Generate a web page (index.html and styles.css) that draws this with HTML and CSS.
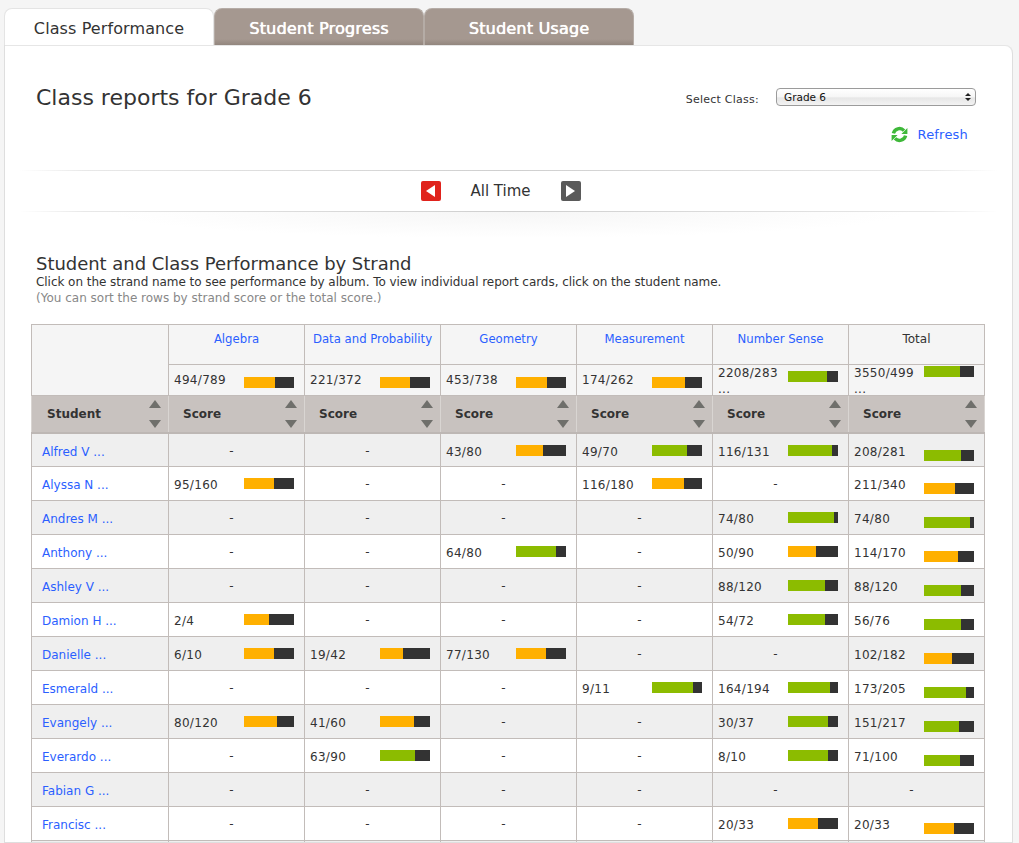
FILE: index.html
```html
<!DOCTYPE html>
<html lang="en">
<head>
<meta charset="utf-8">
<title>Class reports for Grade 6</title>
<link rel="stylesheet" href="styles.css">
</head>
<body>
<nav class="tabs">
  <a class="tab tab-active">Class Performance</a>
  <a class="tab">Student Progress</a>
  <a class="tab">Student Usage</a>
</nav>
<main class="panel">
  <header class="head">
    <h1 class="title">Class reports for Grade 6</h1>
    <div class="controls">
      <div class="class-picker">
        <label class="picker-label" for="cls">Select Class:</label>
        <div class="select-wrap">
          <select id="cls" class="select"><option>Grade 6</option></select>
        </div>
      </div>
      <a class="refresh">
        <svg class="refresh-icon" width="17" height="17" viewBox="0 0 17 17"><path fill="none" stroke="#3fb83a" stroke-width="3.4" d="M2.400 7.400A6.200 6.200 0 0 1 13 4.600M14.600 9.600A6.200 6.200 0 0 1 4 12.400"/><path fill="#3fb83a" d="M16.400 2V8H10.400zM0.600 15V9H6.600z"/></svg>
        <span>Refresh</span>
      </a>
    </div>
  </header>
  <div class="timebar">
    <button class="nav-btn nav-prev"><span class="tri-left"></span></button>
    <span class="time-label">All Time</span>
    <button class="nav-btn nav-next"><span class="tri-right"></span></button>
  </div>
  <section class="strand">
    <h2 class="strand-title">Student and Class Performance by Strand</h2>
    <p class="strand-help">Click on the strand name to see performance by album. To view individual report cards, click on the student name.</p>
    <p class="strand-note">(You can sort the rows by strand score or the total score.)</p>
    <table class="grid">
      <colgroup><col class="c-first"><col class="c"><col class="c"><col class="c"><col class="c"><col class="c"><col class="c"></colgroup>
      <thead>
        <tr class="r-names">
          <th rowspan="2" class="blank"></th>
          <th><a class="link">Algebra</a></th>
          <th><a class="link">Data and Probability</a></th>
          <th><a class="link">Geometry</a></th>
          <th><a class="link">Measurement</a></th>
          <th><a class="link">Number Sense</a></th>
          <th class="total-name">Total</th>
        </tr>
        <tr class="r-sum">
          <td><div class="sum"><span>494/789</span><span class="bar"><i class="o" style="width:31px"></i></span></div></td>
          <td><div class="sum"><span>221/372</span><span class="bar"><i class="o" style="width:30px"></i></span></div></td>
          <td><div class="sum"><span>453/738</span><span class="bar"><i class="o" style="width:31px"></i></span></div></td>
          <td><div class="sum"><span>174/262</span><span class="bar"><i class="o" style="width:33px"></i></span></div></td>
          <td><div class="sum wrap"><span>2208/283<br>...</span><span class="bar"><i class="g" style="width:39px"></i></span></div></td>
          <td><div class="sum wrap wrap-total"><span>3550/499<br>...</span><span class="bar"><i class="g" style="width:36px"></i></span></div></td>
        </tr>
        <tr class="r-sort">
          <th class="sort-cell"><div class="sort"><span>Student</span><span class="arrows"><b class="up"></b><b class="down"></b></span></div></th>
          <th class="sort-cell"><div class="sort"><span>Score</span><span class="arrows"><b class="up"></b><b class="down"></b></span></div></th>
          <th class="sort-cell"><div class="sort"><span>Score</span><span class="arrows"><b class="up"></b><b class="down"></b></span></div></th>
          <th class="sort-cell"><div class="sort"><span>Score</span><span class="arrows"><b class="up"></b><b class="down"></b></span></div></th>
          <th class="sort-cell"><div class="sort"><span>Score</span><span class="arrows"><b class="up"></b><b class="down"></b></span></div></th>
          <th class="sort-cell"><div class="sort"><span>Score</span><span class="arrows"><b class="up"></b><b class="down"></b></span></div></th>
          <th class="sort-cell"><div class="sort"><span>Score</span><span class="arrows"><b class="up"></b><b class="down"></b></span></div></th>
        </tr>
      </thead>
      <tbody>
        <tr>
          <td><a class="link name">Alfred V ...</a></td>
          <td><div class="dash">-</div></td>
          <td><div class="dash">-</div></td>
          <td><div class="cell"><span>43/80</span><span class="bar"><i class="o" style="width:27px"></i></span></div></td>
          <td><div class="cell"><span>49/70</span><span class="bar"><i class="g" style="width:35px"></i></span></div></td>
          <td><div class="cell"><span>116/131</span><span class="bar"><i class="g" style="width:44px"></i></span></div></td>
          <td><div class="cell total"><span>208/281</span><span class="bar"><i class="g" style="width:37px"></i></span></div></td>
        </tr>
        <tr>
          <td><a class="link name">Alyssa N ...</a></td>
          <td><div class="cell"><span>95/160</span><span class="bar"><i class="o" style="width:30px"></i></span></div></td>
          <td><div class="dash">-</div></td>
          <td><div class="dash">-</div></td>
          <td><div class="cell"><span>116/180</span><span class="bar"><i class="o" style="width:32px"></i></span></div></td>
          <td><div class="dash">-</div></td>
          <td><div class="cell total"><span>211/340</span><span class="bar"><i class="o" style="width:31px"></i></span></div></td>
        </tr>
        <tr>
          <td><a class="link name">Andres M ...</a></td>
          <td><div class="dash">-</div></td>
          <td><div class="dash">-</div></td>
          <td><div class="dash">-</div></td>
          <td><div class="dash">-</div></td>
          <td><div class="cell"><span>74/80</span><span class="bar"><i class="g" style="width:46px"></i></span></div></td>
          <td><div class="cell total"><span>74/80</span><span class="bar"><i class="g" style="width:46px"></i></span></div></td>
        </tr>
        <tr>
          <td><a class="link name">Anthony ...</a></td>
          <td><div class="dash">-</div></td>
          <td><div class="dash">-</div></td>
          <td><div class="cell"><span>64/80</span><span class="bar"><i class="g" style="width:40px"></i></span></div></td>
          <td><div class="dash">-</div></td>
          <td><div class="cell"><span>50/90</span><span class="bar"><i class="o" style="width:28px"></i></span></div></td>
          <td><div class="cell total"><span>114/170</span><span class="bar"><i class="o" style="width:34px"></i></span></div></td>
        </tr>
        <tr>
          <td><a class="link name">Ashley V ...</a></td>
          <td><div class="dash">-</div></td>
          <td><div class="dash">-</div></td>
          <td><div class="dash">-</div></td>
          <td><div class="dash">-</div></td>
          <td><div class="cell"><span>88/120</span><span class="bar"><i class="g" style="width:37px"></i></span></div></td>
          <td><div class="cell total"><span>88/120</span><span class="bar"><i class="g" style="width:37px"></i></span></div></td>
        </tr>
        <tr>
          <td><a class="link name">Damion H ...</a></td>
          <td><div class="cell"><span>2/4</span><span class="bar"><i class="o" style="width:25px"></i></span></div></td>
          <td><div class="dash">-</div></td>
          <td><div class="dash">-</div></td>
          <td><div class="dash">-</div></td>
          <td><div class="cell"><span>54/72</span><span class="bar"><i class="g" style="width:37px"></i></span></div></td>
          <td><div class="cell total"><span>56/76</span><span class="bar"><i class="g" style="width:37px"></i></span></div></td>
        </tr>
        <tr>
          <td><a class="link name">Danielle ...</a></td>
          <td><div class="cell"><span>6/10</span><span class="bar"><i class="o" style="width:30px"></i></span></div></td>
          <td><div class="cell"><span>19/42</span><span class="bar"><i class="o" style="width:23px"></i></span></div></td>
          <td><div class="cell"><span>77/130</span><span class="bar"><i class="o" style="width:30px"></i></span></div></td>
          <td><div class="dash">-</div></td>
          <td><div class="dash">-</div></td>
          <td><div class="cell total"><span>102/182</span><span class="bar"><i class="o" style="width:28px"></i></span></div></td>
        </tr>
        <tr>
          <td><a class="link name">Esmerald ...</a></td>
          <td><div class="dash">-</div></td>
          <td><div class="dash">-</div></td>
          <td><div class="dash">-</div></td>
          <td><div class="cell"><span>9/11</span><span class="bar"><i class="g" style="width:41px"></i></span></div></td>
          <td><div class="cell"><span>164/194</span><span class="bar"><i class="g" style="width:42px"></i></span></div></td>
          <td><div class="cell total"><span>173/205</span><span class="bar"><i class="g" style="width:42px"></i></span></div></td>
        </tr>
        <tr>
          <td><a class="link name">Evangely ...</a></td>
          <td><div class="cell"><span>80/120</span><span class="bar"><i class="o" style="width:33px"></i></span></div></td>
          <td><div class="cell"><span>41/60</span><span class="bar"><i class="o" style="width:34px"></i></span></div></td>
          <td><div class="dash">-</div></td>
          <td><div class="dash">-</div></td>
          <td><div class="cell"><span>30/37</span><span class="bar"><i class="g" style="width:40px"></i></span></div></td>
          <td><div class="cell total"><span>151/217</span><span class="bar"><i class="g" style="width:35px"></i></span></div></td>
        </tr>
        <tr>
          <td><a class="link name">Everardo ...</a></td>
          <td><div class="dash">-</div></td>
          <td><div class="cell"><span>63/90</span><span class="bar"><i class="g" style="width:35px"></i></span></div></td>
          <td><div class="dash">-</div></td>
          <td><div class="dash">-</div></td>
          <td><div class="cell"><span>8/10</span><span class="bar"><i class="g" style="width:40px"></i></span></div></td>
          <td><div class="cell total"><span>71/100</span><span class="bar"><i class="g" style="width:36px"></i></span></div></td>
        </tr>
        <tr>
          <td><a class="link name">Fabian G ...</a></td>
          <td><div class="dash">-</div></td>
          <td><div class="dash">-</div></td>
          <td><div class="dash">-</div></td>
          <td><div class="dash">-</div></td>
          <td><div class="dash">-</div></td>
          <td><div class="dash">-</div></td>
        </tr>
        <tr>
          <td><a class="link name">Francisc ...</a></td>
          <td><div class="dash">-</div></td>
          <td><div class="dash">-</div></td>
          <td><div class="dash">-</div></td>
          <td><div class="dash">-</div></td>
          <td><div class="cell"><span>20/33</span><span class="bar"><i class="o" style="width:30px"></i></span></div></td>
          <td><div class="cell total"><span>20/33</span><span class="bar"><i class="o" style="width:30px"></i></span></div></td>
        </tr>
        <tr><td></td><td></td><td></td><td></td><td></td><td></td><td></td></tr>
      </tbody>
    </table>
  </section>
</main>
</body>
</html>
```
FILE: styles.css
```css
* { box-sizing: border-box; }
html, body { height: 843px; overflow: hidden; }
body {
  margin: 0;
  padding: 8px 6px 0 4px;
  background: #f5f5f5;
  color: #333;
  font-family: "DejaVu Sans", Verdana, sans-serif;
  font-size: 12px;
}
.tabs { display: flex; height: 37px; }
.tab {
  width: 210px;
  display: flex;
  align-items: center;
  justify-content: center;
  padding-top: 2px;
  font-size: 16px;
  letter-spacing: .2px;
  color: #fff;
  border-radius: 8px 8px 0 0;
  background: linear-gradient(#a59890 0, #a59890 30px, #8f837b 37px);
  border: 1px solid #b5aca6;
  border-bottom: 0;
  text-shadow: .3px 0 0 #fff, 0 0 1px rgba(255,255,255,.6);
}
.tab-active {
  background: #fff;
  color: #333;
  border-color: #e4e4e4;
  border-bottom: 0;
  letter-spacing: .1px;
  text-shadow: none;
}
.panel {
  background: #fff;
  border: 1px solid #dedede;
  border-top: 0;
  border-radius: 0 8px 0 0;
  height: 798px;
  overflow: hidden;
  box-shadow: inset 0 1px 0 #e6e6e6;
}
.head {
  height: 125px;
  padding: 38px 44px 0 31px;
  display: flex;
  justify-content: space-between;
}
.title { margin: 0; font-size: 22px; font-weight: 400; line-height: 30px; color: #333; }
.controls { display: flex; flex-direction: column; align-items: flex-end; padding-top: 5px; }
.class-picker { display: flex; align-items: center; gap: 17px; margin-right: -8px; }
.picker-label { font-size: 11px; padding-top: 4px; letter-spacing: .25px; }
.select-wrap { position: relative; width: 200px; height: 18px; }
.select-wrap::before, .select-wrap::after {
  content: "";
  position: absolute;
  right: 5px;
  border-left: 3px solid transparent;
  border-right: 3px solid transparent;
}
.select-wrap::before { top: 5px; border-bottom: 3px solid #222; }
.select-wrap::after { top: 10px; border-top: 3px solid #222; }
.select {
  appearance: none;
  width: 100%;
  height: 18px;
  padding: 0 0 1px 7px;
  border: 1px solid #9b9b9b;
  border-radius: 4px;
  background: linear-gradient(#fff, #f6f6f6 50%, #e6e6e6 55%, #f3f3f3);
  font: 10.5px "DejaVu Sans", Verdana, sans-serif;
  color: #111;
}
.refresh {
  display: flex;
  align-items: center;
  gap: 10px;
  margin-top: 20px;
  color: #2b5fff;
  font-size: 13px;
  letter-spacing: .2px;
}
.timebar {
  height: 42px;
  display: flex;
  align-items: center;
  justify-content: center;
  padding-right: 16px;
  border-top: 1px solid;
  border-bottom: 1px solid;
  border-image: linear-gradient(90deg, transparent 1.5%, #e8e8e8 8%, #cfcfcf 50%, #e8e8e8 92%, transparent 98.500%) 1;
}
.time-label { width: 120px; text-align: center; font-size: 15px; }
.nav-btn {
  width: 20px;
  height: 20px;
  padding: 0;
  border: 0;
  border-radius: 2px;
  display: flex;
  align-items: center;
  justify-content: center;
}
.nav-prev { background: #e0231c; }
.nav-next { background: #5a5a5a; }
.tri-left { border-top: 6px solid transparent; border-bottom: 6px solid transparent; border-right: 9px solid #fff; }
.tri-right { border-top: 6px solid transparent; border-bottom: 6px solid transparent; border-left: 9px solid #fff; }
.strand {
  padding: 41px 0 0 26px;
  background: radial-gradient(ellipse 400px 26px at 50% 0, #f6f6f6, #fff) no-repeat;
}
.strand-title { margin: 0 0 0 5px; font-size: 18px; font-weight: 400; line-height: 22px; letter-spacing: -.03px; }
.strand-help { margin: 0 0 0 5px; line-height: 14px; font-size: 12px; color: #333; letter-spacing: -.05px; }
.strand-note { margin: 2px 0 0 5px; line-height: 15px; font-size: 12px; color: #888; }
.grid {
  margin-top: 18px;
  width: 954px;
  table-layout: fixed;
  border-collapse: collapse;
  font-size: 12px;
}
.c-first { width: 137px; }
.c { width: 136px; }
.grid td, .grid th {
  padding: 0;
  border: 1px solid #c2bcb9;
  vertical-align: top;
  font-weight: 400;
}
.link { color: #2b5fff; }
.r-names { height: 40px; }
.r-names th { background: #f5f5f5; padding-top: 7px; line-height: 14px; text-align: center; }
.r-names .link { font-size: 11.7px; }
.blank { background: #f5f5f5; }
.total-name { color: #333; }
.r-sum { height: 31px; }
.r-sum td { background: #f5f5f5; }
.sum {
  height: 30px;
  overflow: hidden;
  display: flex;
  justify-content: space-between;
  padding: 7px 10px 0 5px;
  line-height: 16px;
  letter-spacing: .3px;
}
.sum .bar { margin-top: 5px; }
.wrap { padding-top: 0; }
.wrap .bar { margin-top: 6px; }
.wrap-total .bar { margin-top: 1px; }
.r-sort { height: 37px; }
.sort-cell { background: #c8c2bf; border-color: #d9d5d2 !important; border-top-color: #c8c2bf !important; border-bottom: 2px solid #bdb7b4 !important; }
.sort {
  height: 35px;
  display: flex;
  justify-content: space-between;
  padding: 0 7px 0 15px;
  align-items: center;
  font-weight: 700;
  font-size: 12px;
}
.sort-cell + .sort-cell .sort { padding-left: 14px; }
.arrows { display: flex; flex-direction: column; gap: 12px; }
.up, .down { display: block; width: 0; border-left: 6px solid transparent; border-right: 6px solid transparent; }
.up { border-bottom: 8px solid #6f6f6b; }
.down { border-top: 8px solid #6f6f6b; }
tbody tr { height: 34px; }
tbody tr:nth-child(odd) td { background: #efefef; }
.name { display: block; padding: 10px 0 0 10px; line-height: 16px; }
.dash { padding: 9px 10px 0 0; text-align: center; line-height: 16px; }
.cell {
  display: flex;
  justify-content: space-between;
  align-items: flex-start;
  padding: 10px 10px 0 5px;
  line-height: 16px;
  letter-spacing: .3px;
}
.bar {
  display: block;
  width: 50px;
  height: 11px;
  margin-top: 1px;
  background: #333;
  flex: none;
}
.total .bar { margin-top: 6px; }
.bar i { display: block; height: 11px; }
.o { background: #ffb000; }
.g { background: #8cbc00; }
```
